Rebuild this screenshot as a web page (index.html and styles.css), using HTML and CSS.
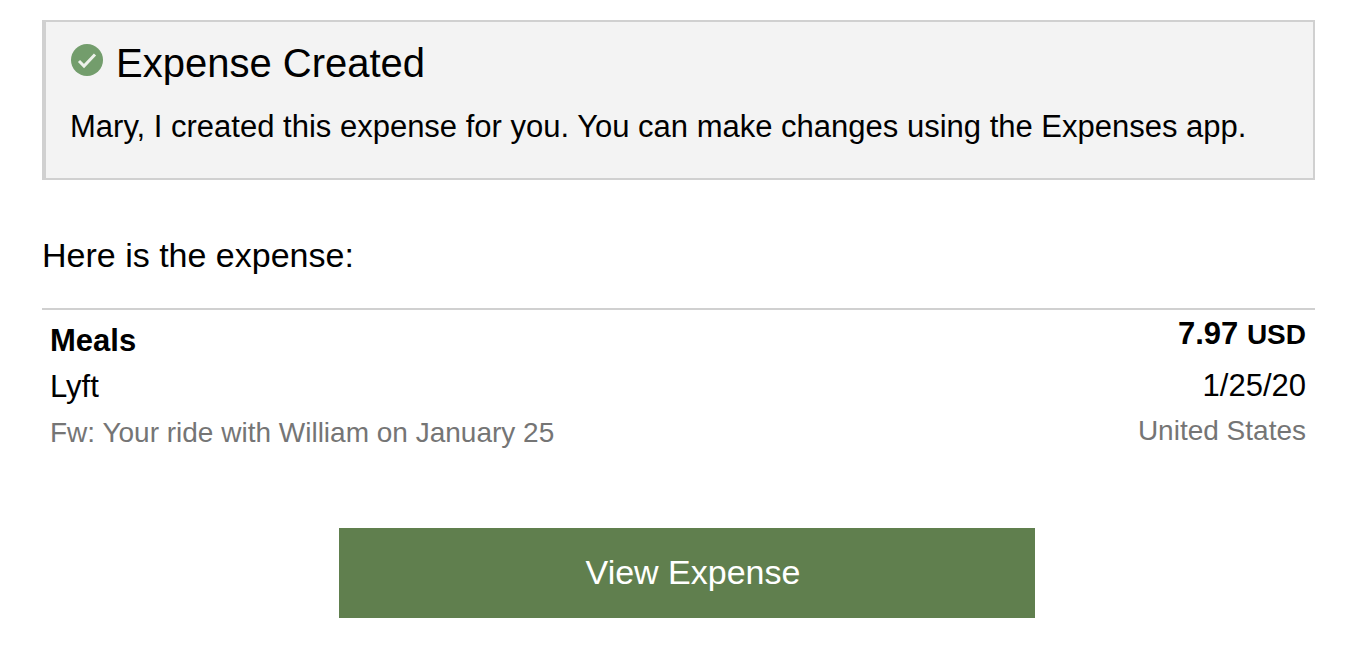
FILE: index.html
```html
<!DOCTYPE html>
<html lang="en">
<head>
<meta charset="utf-8">
<title>Expense Created</title>
<link rel="stylesheet" href="styles.css">
</head>
<body>
<main class="message">
  <section class="notice">
    <h1 class="notice-title">
      <svg class="check" viewBox="0 0 34 34" aria-hidden="true">
        <circle cx="17" cy="17" r="16" fill="#739d6c"/>
        <path d="M9 18l5 5 11-11.500" fill="none" stroke="#edf2eb" stroke-width="3"/>
      </svg>
      <span>Expense Created</span>
    </h1>
    <p class="notice-text">Mary, I created this expense for you. You can make changes using the Expenses app.</p>
  </section>
  <p class="intro">Here is the expense:</p>
  <section class="expense">
    <div class="details">
      <strong class="category">Meals</strong>
      <span class="vendor">Lyft</span>
      <span class="note">Fw: Your ride with William on January 25</span>
    </div>
    <div class="amounts">
      <strong class="amount">7.97 <span class="currency">USD</span></strong>
      <span class="date">1/25/20</span>
      <span class="note">United States</span>
    </div>
  </section>
  <button class="view" type="button">View Expense</button>
</main>
</body>
</html>
```
FILE: styles.css
```css
body {
  margin: 0;
  background: #fff;
  color: #000;
  font-family: "Liberation Sans", Arial, sans-serif;
}
.message {
  display: flex;
  flex-direction: column;
  padding: 20px 35px 32px 42px;
}
.notice {
  border: 2px solid #d0d0d0;
  border-left-width: 4px;
  background: #f3f3f3;
  padding: 18px 24px 31px;
}
.notice-title {
  display: flex;
  align-items: flex-start;
  gap: 12px;
  margin: 0 0 21px;
  font-size: 40px;
  line-height: 46px;
  font-weight: 400;
}
.check {
  flex: none;
  width: 34px;
  height: 34px;
  margin-top: 3px;
}
.notice-text {
  margin: 0;
  font-size: 31px;
  line-height: 40px;
}
.intro {
  margin: 55px 0 33px;
  font-size: 34px;
  line-height: 40px;
}
.expense {
  display: flex;
  justify-content: space-between;
  border-top: 2px solid #d0d0d0;
  padding: 0 9px 0 8px;
}
.details,
.amounts {
  display: flex;
  flex-direction: column;
  font-size: 31px;
  line-height: 46px;
}
.details {
  padding-top: 8px;
}
.amounts {
  padding-top: 1px;
  text-align: right;
}
.amount {
  margin-bottom: 5px;
}
.currency {
  font-size: 28px;
}
.note {
  color: #757575;
  font-size: 28px;
}
.amounts .note {
  line-height: 44px;
}
.view {
  align-self: center;
  width: 696px;
  height: 90px;
  margin: 72px 0 0 17px;
  padding: 0 0 2px 12px;
  border: 0;
  background: #607f4e;
  color: #fff;
  font-family: inherit;
  font-size: 34px;
}
```
